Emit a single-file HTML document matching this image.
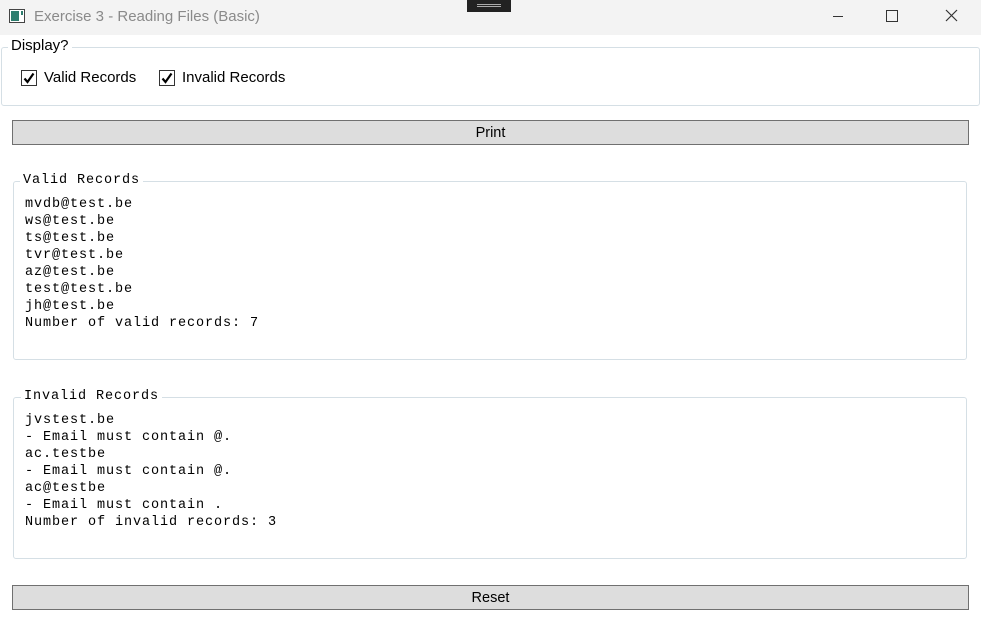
<!DOCTYPE html>
<html><head><style>
body{margin:0;width:981px;height:625px;background:#fff;position:relative;overflow:hidden;font-family:"Segoe UI","Liberation Sans",sans-serif;}
.tb{position:absolute;left:0;top:0;width:981px;height:35px;background:#f3f3f3;}
.title{position:absolute;left:34px;top:8px;font-size:15px;color:#8a8a8a;}
.gb{position:absolute;border:1px solid #d5dfe5;border-radius:3px;}
.lbl{position:absolute;background:#fff;padding:0 3px;}
.cb{position:absolute;width:14px;height:14px;border:1px solid #333;background:#fff;}
.btn{position:absolute;left:12px;width:955px;height:23px;background:#dddddd;border:1px solid #707070;text-align:center;font-size:14.5px;line-height:25px;color:#000;}
.mono{font-family:"Liberation Mono","Courier New",monospace;font-size:13.5px;letter-spacing:0.9px;line-height:17px;color:#000;white-space:pre;position:absolute;}
</style></head><body>
<div class="tb">
<svg style="position:absolute;left:9px;top:9px" width="16" height="14"><rect x="0.5" y="0.5" width="15" height="13" fill="#fff" stroke="#444"/><rect x="2" y="2" width="8" height="10" fill="#2e7d6e"/><rect x="12" y="2" width="2" height="4" fill="#2e7d6e"/></svg>
<div class="title">Exercise 3 - Reading Files (Basic)</div>
<div style="position:absolute;left:467px;top:0;width:44px;height:12px;background:#222"><div style="margin:4px 10px;height:1px;border-top:1px solid #aaa;border-bottom:1px solid #aaa"></div></div>
<div style="position:absolute;left:833px;top:16px;width:10px;height:1px;background:#333"></div>
<div style="position:absolute;left:886px;top:10px;width:10px;height:10px;border:1px solid #333"></div>
<svg style="position:absolute;left:945px;top:9px" width="13" height="13"><path d="M1 1L12 12M12 1L1 12" stroke="#333" stroke-width="1.2"/></svg>
</div>
<div class="gb" style="left:1px;top:47px;width:977px;height:57px"></div>
<div class="lbl" style="left:8px;top:37px;font-size:15px">Display?</div>
<div class="cb" style="left:21px;top:70px"></div>
<svg style="position:absolute;left:22px;top:71px" width="14" height="14"><path d="M2.5 7.5L5.5 11L11.5 2.5" stroke="#000" stroke-width="2.2" fill="none"/></svg>
<div style="position:absolute;left:44px;top:69px;font-size:15px">Valid Records</div>
<div class="cb" style="left:159px;top:70px"></div>
<svg style="position:absolute;left:160px;top:71px" width="14" height="14"><path d="M2.5 7.5L5.5 11L11.5 2.5" stroke="#000" stroke-width="2.2" fill="none"/></svg>
<div style="position:absolute;left:182px;top:69px;font-size:15px">Invalid Records</div>
<div class="btn" style="top:120px">Print</div>
<div class="gb" style="left:13px;top:181px;width:952px;height:177px"></div>
<div class="lbl mono" style="left:20px;top:172px;padding:0 3px">Valid Records</div>
<div class="mono" style="left:25px;top:196px">mvdb@test.be
ws@test.be
ts@test.be
tvr@test.be
az@test.be
test@test.be
jh@test.be
Number of valid records: 7</div>
<div class="gb" style="left:13px;top:397px;width:952px;height:160px"></div>
<div class="lbl mono" style="left:21px;top:388px;padding:0 3px">Invalid Records</div>
<div class="mono" style="left:25px;top:412px">jvstest.be
- Email must contain @.
ac.testbe
- Email must contain @.
ac@testbe
- Email must contain .
Number of invalid records: 3</div>
<div class="btn" style="top:585px">Reset</div>
</body></html>
